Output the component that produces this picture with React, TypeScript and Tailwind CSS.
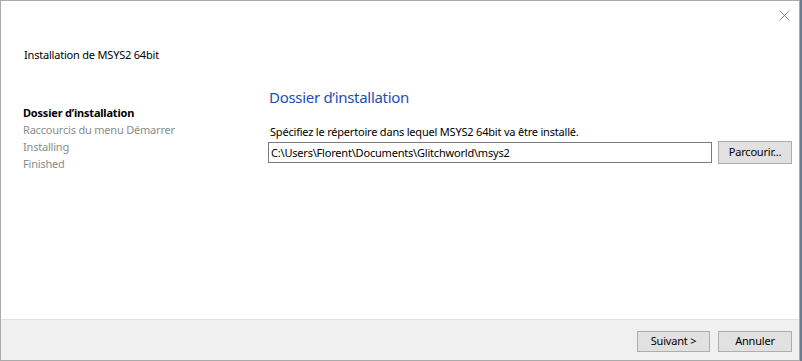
import React, { useState } from 'react';

const steps = [
  { label: 'Dossier d\u2019installation', active: true },
  { label: 'Raccourcis du menu Démarrer', active: false },
  { label: 'Installing', active: false },
  { label: 'Finished', active: false },
];

const App = () => {
  const [path, setPath] = useState('C:\\Users\\Florent\\Documents\\Glitchworld\\msys2');

  return (
    <div
      className="w-[802px] h-[361px] bg-[#6b7a8c] text-[11px] tracking-[-0.2px] text-black"
      style={{ fontFamily: '"Noto Sans", "Segoe UI", sans-serif' }}
    >
      <div className="w-[800px] h-[361px] flex flex-col bg-white border border-[#aaaaaa]">
        {/* top area */}
        <div className="flex-1 flex flex-col">
          <div className="flex justify-end pt-[9px] pr-[9px] h-[30px]">
            <svg width="11" height="11" viewBox="0 0 11 11" className="text-[#8a8a8a]">
              <path d="M0.5 0.5 L10.5 10.5 M10.5 0.5 L0.5 10.5" stroke="currentColor" strokeWidth="1" />
            </svg>
          </div>
          <div className="pl-[23px] pt-[15px] leading-[17px]">Installation de MSYS2 64bit</div>

          <div className="flex mt-[23px]">
            {/* steps */}
            <div className="w-[267px] pl-[22px] pt-[18px] flex flex-col leading-[17px]">
              {steps.map((s) => (
                <div key={s.label} className={s.active ? 'font-bold text-black' : 'text-[#8c8c8c]'}>
                  {s.label}
                </div>
              ))}
            </div>

            {/* page */}
            <div className="flex-1 pr-[7px]">
              <h1 className="text-[15px] tracking-[-0.3px] leading-[22px] text-[#1a4fb5] pl-[1px]">
                Dossier d&rsquo;installation
              </h1>
              <p className="mt-[15px] pl-[2px] leading-[17px]">
                Spécifiez le répertoire dans lequel MSYS2 64bit va être installé.
              </p>
              <div className="flex items-center gap-[6px] mt-[1px]">
                <input
                  value={path}
                  onChange={(e) => setPath(e.target.value)}
                  className="flex-1 h-[21px] border border-[#7a7a7a] px-[2px] text-[11px] tracking-[-0.2px] outline-none"
                />
                <button className="w-[74px] h-[23px] bg-[#e1e1e1] border border-[#adadad] text-[11px]">
                  Parcourir...
                </button>
              </div>
            </div>
          </div>
        </div>

        {/* footer */}
        <div className="h-[41px] bg-[#f0f0f0] border-t border-[#dfdfdf] flex justify-end items-start gap-[8px] pt-[11px] pr-[7px]">
          <button className="w-[73px] h-[21px] bg-[#e1e1e1] border border-[#adadad] text-[11px]">Suivant &gt;</button>
          <button className="w-[74px] h-[21px] bg-[#e1e1e1] border border-[#adadad] text-[11px]">Annuler</button>
        </div>
      </div>
    </div>
  );
};

export default App;
